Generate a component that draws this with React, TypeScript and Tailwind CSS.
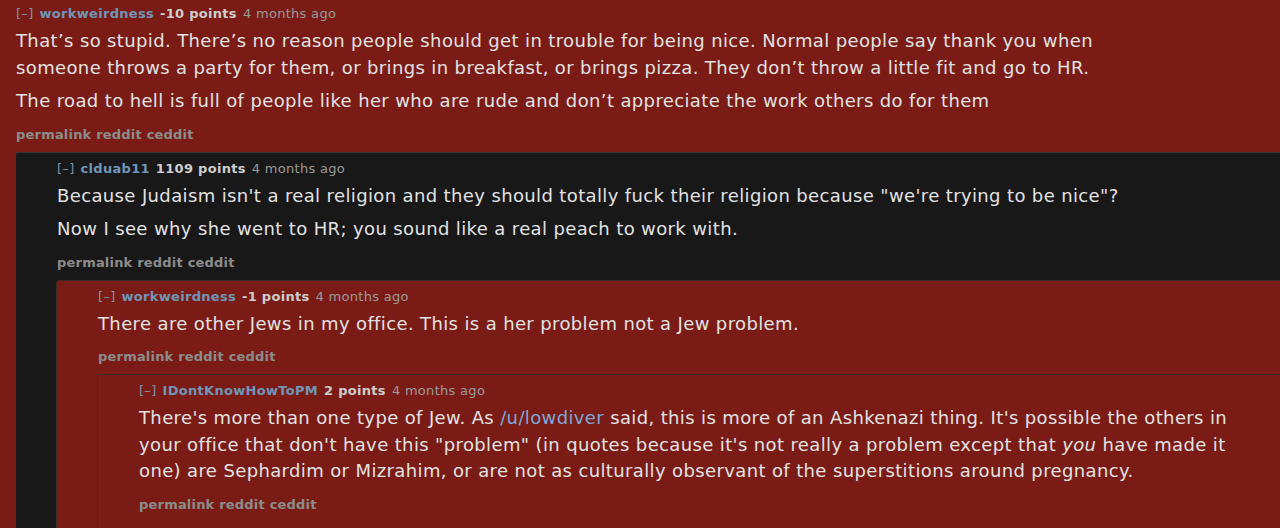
import React from "react";

interface CommentData {
  author: string;
  points: string;
  age: string;
  body: React.ReactNode[];
  dark?: boolean;
  children?: CommentData[];
}

const thread: CommentData = {
  author: "workweirdness",
  points: "-10 points",
  age: "4 months ago",
  body: [
    "That’s so stupid. There’s no reason people should get in trouble for being nice. Normal people say thank you when someone throws a party for them, or brings in breakfast, or brings pizza. They don’t throw a little fit and go to HR.",
    "The road to hell is full of people like her who are rude and don’t appreciate the work others do for them",
  ],
  children: [
    {
      author: "clduab11",
      points: "1109 points",
      age: "4 months ago",
      dark: true,
      body: [
        'Because Judaism isn\'t a real religion and they should totally fuck their religion because "we\'re trying to be nice"?',
        "Now I see why she went to HR; you sound like a real peach to work with.",
      ],
      children: [
        {
          author: "workweirdness",
          points: "-1 points",
          age: "4 months ago",
          body: ["There are other Jews in my office. This is a her problem not a Jew problem."],
          children: [
            {
              author: "IDontKnowHowToPM",
              points: "2 points",
              age: "4 months ago",
              body: [
                <>
                  There's more than one type of Jew. As{" "}
                  <a className="text-[#7da7d9]">/u/lowdiver</a> said, this is
                  more of an Ashkenazi thing. It's possible the others in your
                  office that don't have this "problem" (in quotes because
                  it's not really a problem except that <em>you</em> have made
                  it one) are Sephardim or Mizrahim, or are not as culturally
                  observant of the superstitions around pregnancy.
                </>,
              ],
            },
          ],
        },
      ],
    },
  ],
};

function Comment({ data, nested }: { data: CommentData; nested?: boolean }) {
  const box = nested
    ? data.dark
      ? "-ml-px mr-[-60px] rounded-[3px] border border-[#363636] bg-[#181818] pl-[41px] pt-2 pb-10"
      : "-ml-px mr-[-60px] rounded-[3px] border border-[#3e2a27] bg-[#7a1c15] pl-[41px] pt-2 pb-10"
    : "pl-4 pt-[6px]";

  return (
    <div className={box}>
      <div className="flex items-baseline gap-[6px] text-[13px] leading-4 tracking-[0.3px]">
        <span className="text-[#7c93ab]">[–]</span>
        <span className="font-bold text-[#6f96b8]">{data.author}</span>
        <span className="font-bold text-[#cdcdcd]">{data.points}</span>
        <span className="text-[#9a9a9a]">{data.age}</span>
      </div>

      <div className="mt-[6px] max-w-[1118px] text-[18px] leading-[26.5px] tracking-[0.37px] text-[#e2e2e2]">
        {data.body.map((p, i) => (
          <p key={i} className={i > 0 ? "mt-[7px]" : ""}>
            {p}
          </p>
        ))}
      </div>

      <div className="mt-[12px] mb-[9px] text-[13px] font-bold leading-4 tracking-[0.2px] text-[#8c8c8c]">
        permalink reddit ceddit
      </div>

      {data.children?.map((c, i) => (
        <Comment key={i} data={c} nested />
      ))}
    </div>
  );
}

export default function App() {
  return (
    <div
      className="h-[528px] w-[1280px] overflow-hidden bg-[#7a1c15]"
      style={{ fontFamily: '"DejaVu Sans", Verdana, sans-serif' }}
    >
      <Comment data={thread} />
    </div>
  );
}
